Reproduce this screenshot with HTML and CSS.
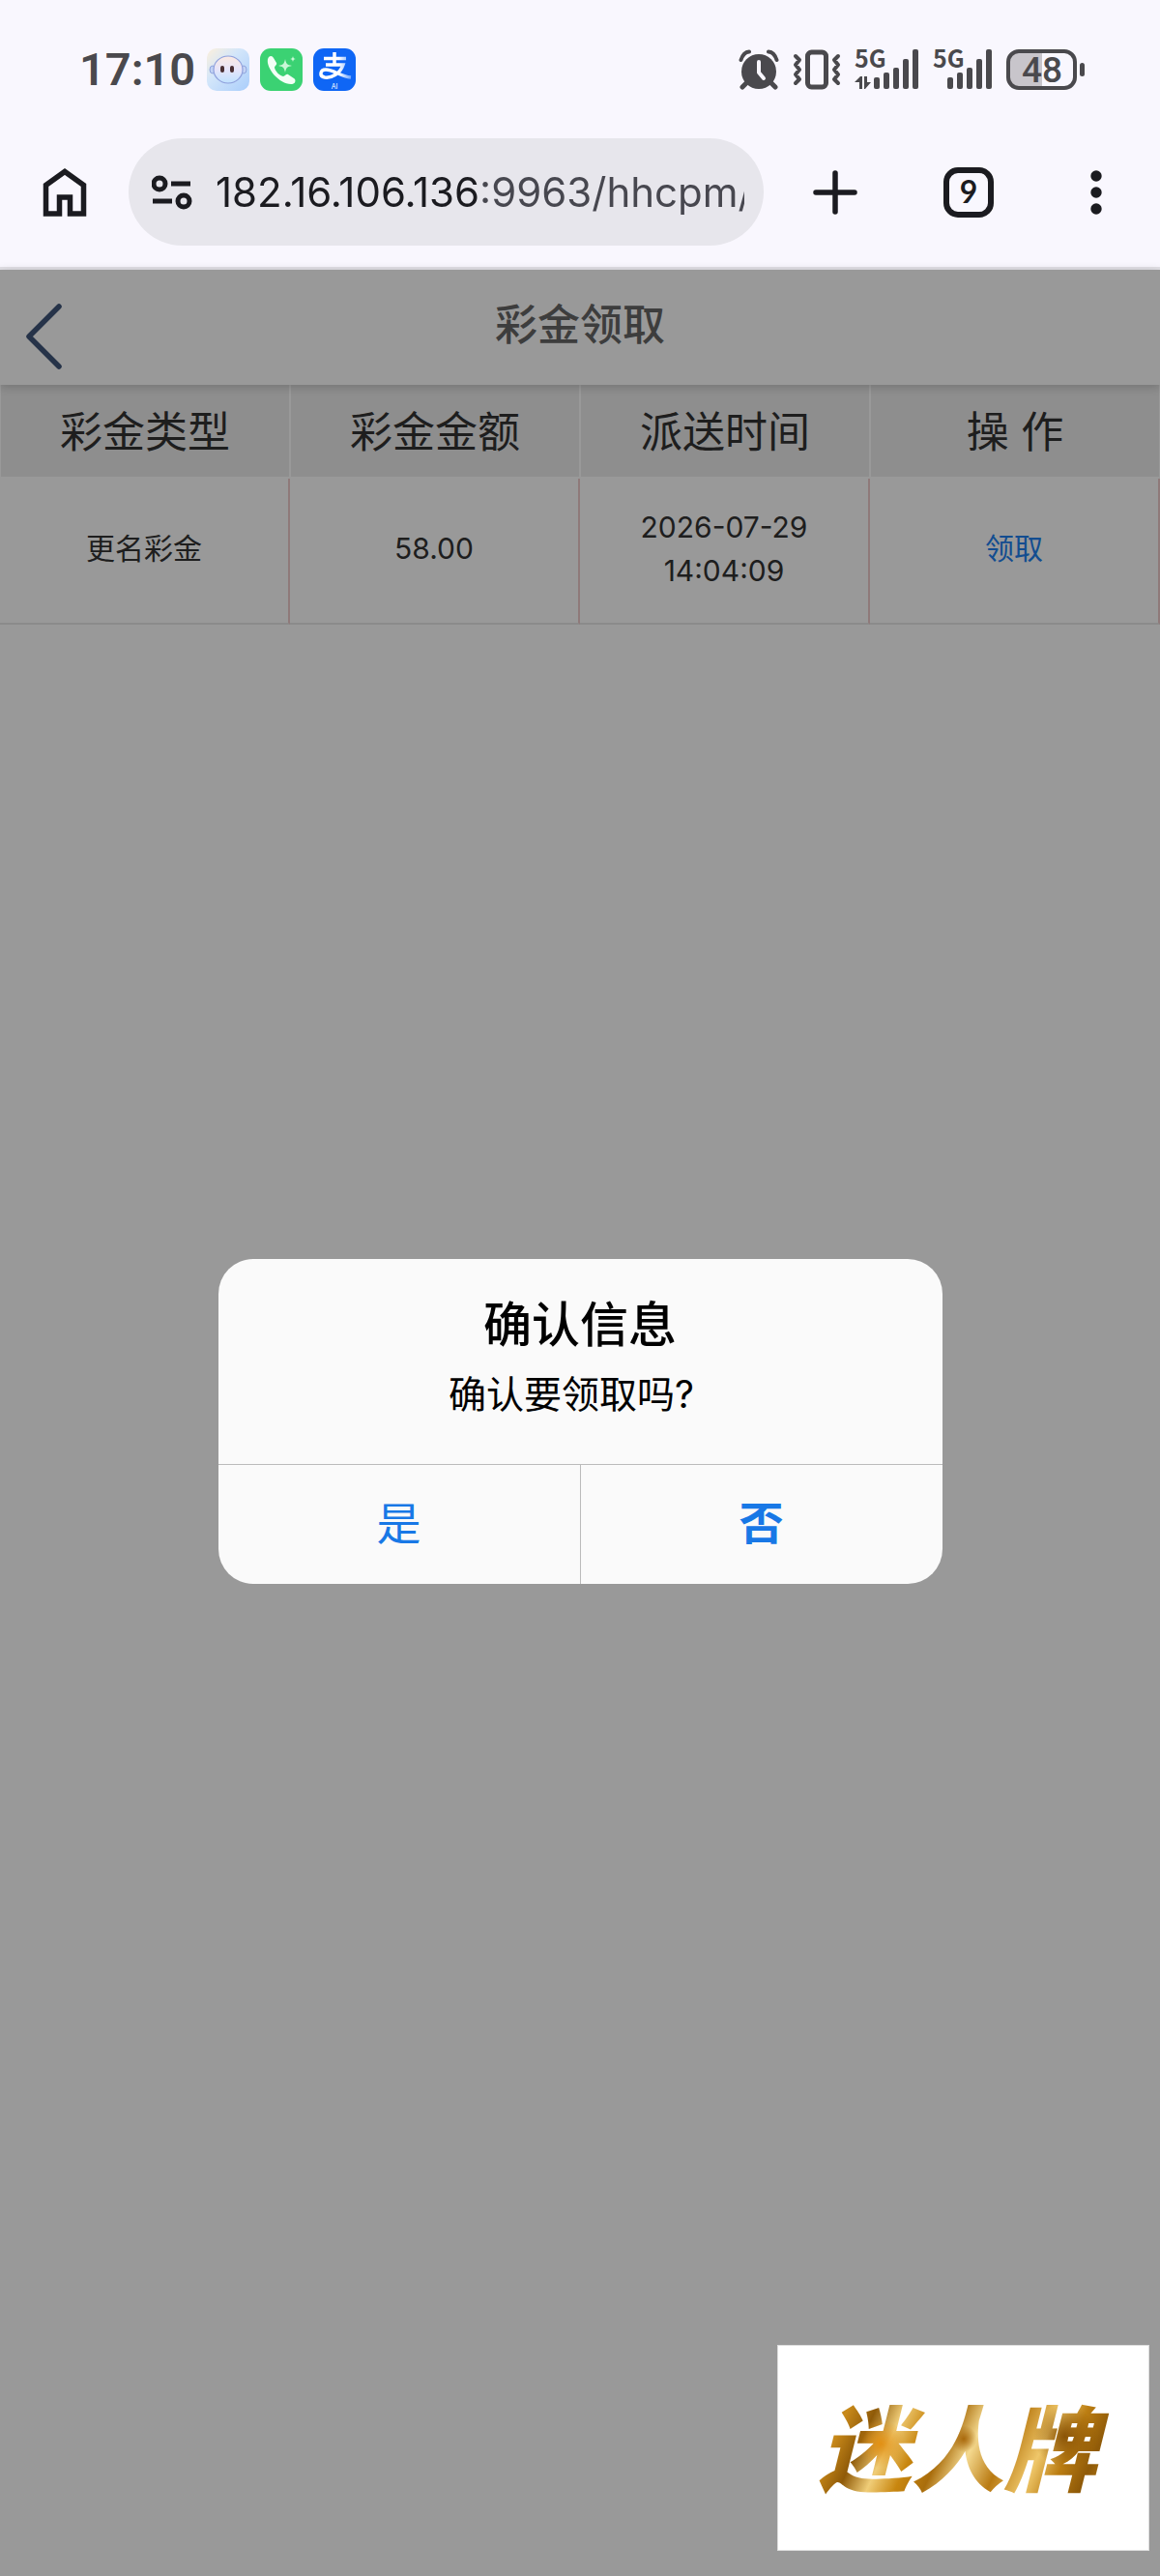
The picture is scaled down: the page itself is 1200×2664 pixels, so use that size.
FILE: index.html
```
<!DOCTYPE html>
<html lang="zh-CN">
<head>
    <meta charset="UTF-8">
    <meta name="viewport" content="width=device-width, initial-scale=1">
    <title>彩金领取</title>
    <link rel="stylesheet" href="styles.css">
</head>
<body>

    <div class="statusbar">
        <span class="clock">17:10</span>
        <div class="apps">
            <svg width="44" height="44" viewBox="0 0 44 44">
                <defs>
                    <linearGradient id="robotBg" x1="0" y1="0" x2="1" y2="1">
                        <stop offset="0" stop-color="#fdf0dc"/>
                        <stop offset=".4" stop-color="#d3e6fa"/>
                        <stop offset="1" stop-color="#a9cdfb"/>
                    </linearGradient>
                    <linearGradient id="robotFace" x1="0" y1="0" x2="0" y2="1">
                        <stop offset="0" stop-color="#fbeae2"/>
                        <stop offset=".5" stop-color="#e6e4fa"/>
                        <stop offset="1" stop-color="#bfe2ff"/>
                    </linearGradient>
                </defs>
                <rect width="44" height="44" rx="10" fill="url(#robotBg)"/>
                <ellipse cx="6" cy="22" rx="3" ry="4" fill="#c3d3f5" stroke="#8fa4dd"/>
                <ellipse cx="38" cy="22" rx="3" ry="4" fill="#c3d3f5" stroke="#8fa4dd"/>
                <ellipse cx="22" cy="22" rx="15" ry="14" fill="url(#robotFace)" stroke="#8fa0dc" stroke-width="1.2"/>
                <rect x="14" y="18" width="4" height="7" rx="2" fill="#4a2f33"/>
                <rect x="24" y="18" width="4" height="7" rx="2" fill="#4a2f33"/>
            </svg>
            <svg width="44" height="44" viewBox="0 0 44 44">
                <rect width="44" height="44" rx="11" fill="#3bd273"/>
                <path d="M9 9c2-2 4-1 5 1l3 5c1 2-2 3-2 5 1 4 5 8 9 9 2 0 3-3 5-2l6 4c3 2 1 6-2 6C21 38 6 21 8 11z" fill="#f3fff6"/>
                <path d="M26 11c1 5 2 6 7 7-5 1-6 2-7 7-1-5-2-6-7-7 5-1 6-2 7-7zM34 8c.4 2 1 2.600 3 3-2 .4-2.600 1-3 3-.4-2-1-2.600-3-3 2-.4 2.600-1 3-3z" fill="#c8f7d6"/>
            </svg>
            <svg width="44" height="44" viewBox="0 0 44 44">
                <defs>
                    <linearGradient id="tail" x1="0" y1="0" x2="1" y2="0">
                        <stop offset=".6" stop-color="#fff"/>
                        <stop offset="1" stop-color="#6ea6ff"/>
                    </linearGradient>
                </defs>
                <rect width="44" height="44" rx="11" fill="#0f66f5"/>
                <path d="M11 10.500h23M22 4v13M13 17h18C28 26 19 31 12 30c-6-1-5-8 1-8 8 0 15 7 26 8" fill="none" stroke="url(#tail)" stroke-width="3.500"/>
                <text x="22" y="42" class="ai">AI</text>
            </svg>
        </div>
        <div class="indicators">
            <svg width="42" height="42" viewBox="0 0 42 42">
                <circle cx="21" cy="23" r="18" fill="#4a494d"/>
                <path d="M2.500 11Q5 3 11 2.500M39.500 11Q37 3 31 2.500" fill="none" stroke="#4a494d" stroke-width="4" stroke-linecap="round"/>
                <path d="M8 35l-4 4M34 35l4 4" stroke="#4a494d" stroke-width="5" stroke-linecap="round"/>
                <path d="M21 13v11l5 6" fill="none" stroke="#f9f7fe" stroke-width="4" stroke-linecap="round" stroke-linejoin="round"/>
            </svg>
            <svg width="50" height="42" viewBox="0 0 50 42">
                <rect x="15.500" y="3" width="19" height="36" rx="4" fill="none" stroke="#4a494d" stroke-width="5"/>
                <path d="M3 7l4 4-4 5 4 5-4 5 4 5-4 4M47 7l-4 4 4 5-4 5 4 5-4 5 4 4" fill="none" stroke="#4a494d" stroke-width="4" stroke-linecap="round" stroke-linejoin="round"/>
            </svg>
            <svg width="67" height="62" viewBox="0 -10 67 62" fill="#4a494d">
                <text x="0" y="19" class="net">5G</text>
                <path d="M0 34l6-6h2v13H5v-7zM10 28h3v6h4l-6 7h-1z"/>
                <rect x="20" y="29" width="6" height="12" rx="2"/>
                <rect x="30" y="24" width="6" height="17" rx="2"/>
                <rect x="40" y="19" width="6" height="22" rx="2"/>
                <rect x="50" y="10" width="6" height="31" rx="2"/>
                <rect x="60" y="0" width="6" height="41" rx="2"/>
            </svg>
            <svg width="62" height="62" viewBox="0 -10 62 62" fill="#4a494d">
                <text x="0" y="19" class="net">5G</text>
                <rect x="15" y="29" width="6" height="12" rx="2"/>
                <rect x="25" y="24" width="6" height="17" rx="2"/>
                <rect x="35" y="19" width="6" height="22" rx="2"/>
                <rect x="45" y="10" width="6" height="31" rx="2"/>
                <rect x="55" y="0" width="6" height="41" rx="2"/>
            </svg>
            <svg width="82" height="42" viewBox="0 0 82 42">
                <path d="M13 3h24v36H13Q3 39 3 29V13Q3 3 13 3z" fill="#c8c5cb"/>
                <rect x="2" y="2" width="69" height="38" rx="11" fill="none" stroke="#4a494d" stroke-width="4"/>
                <rect x="76" y="14" width="5" height="14" rx="2.500" fill="#4a494d"/>
                <text x="37" y="34" class="level">48</text>
            </svg>
        </div>
    </div>

    <div class="toolbar">
        <button class="tool home" aria-label="主页">
            <svg width="46" height="52" viewBox="0 0 46 52">
                <path d="M3.500 48V18.500L23 4.500l19.500 14V48H28.500V31H17.500v17z" fill="none" stroke="#1b1b20" stroke-width="5.500"/>
            </svg>
        </button>
        <label class="address">
            <svg width="42" height="36" viewBox="0 0 42 36" fill="none" stroke="#1b1b20" stroke-width="5">
                <circle cx="8" cy="9" r="6"/>
                <circle cx="33" cy="27" r="6"/>
                <path d="M20 9h20M1 27h20"/>
            </svg>
            <input class="url" type="text" aria-label="网址" value="182.16.106.136:9963/hhcpm/">
        </label>
        <button class="tool add" aria-label="新标签页">
            <svg width="46" height="46" viewBox="0 0 46 46">
                <path d="M23 3v40M3 23h40" stroke="#1b1b20" stroke-width="5.500" stroke-linecap="round"/>
            </svg>
        </button>
        <button class="tool tabs"><span class="tab-count">9</span></button>
        <button class="tool menu" aria-label="菜单">
            <svg width="12" height="46" viewBox="0 0 12 46" fill="#1b1b20">
                <circle cx="6" cy="6" r="5.700"/>
                <circle cx="6" cy="23" r="5.700"/>
                <circle cx="6" cy="40" r="5.700"/>
            </svg>
        </button>
    </div>

    <main class="page">
        <header class="navbar">
            <a class="back" href="#" aria-label="返回">
                <svg width="40" height="70" viewBox="0 0 40 70">
                    <path d="M37 4L6 35l31 31" fill="none" stroke="#40557a" stroke-width="5.500" stroke-linecap="round" stroke-linejoin="round"/>
                </svg>
            </a>
            <h1>彩金领取</h1>
        </header>

        <table class="bonus">
            <thead>
                <tr><th>彩金类型</th><th>彩金金额</th><th>派送时间</th><th>操 作</th></tr>
            </thead>
            <tbody>
                <tr>
                    <td>更名彩金</td>
                    <td>58.00</td>
                    <td>2026-07-29<br>14:04:09</td>
                    <td><a href="#">领取</a></td>
                </tr>
            </tbody>
        </table>

        <div class="overlay">
            <div class="modal" role="dialog" aria-labelledby="modalTitle">
                <div class="modal-inner">
                    <h2 id="modalTitle">确认信息</h2>
                    <p>确认要领取吗?</p>
                </div>
                <div class="modal-buttons">
                    <button>是</button>
                    <button class="strong">否</button>
                </div>
            </div>
        </div>

        <div class="brand"><span>迷人牌</span></div>
    </main>

</body>
</html>
```
FILE: styles.css
```
* {
    margin: 0;
    padding: 0;
    box-sizing: border-box;
}
body {
    display: flex;
    flex-direction: column;
    min-height: 100vh;
    background: #f9f7fe;
    font-family: Inter, "Noto Sans CJK SC", sans-serif;
}
button {
    background: none;
    border: none;
    font-family: inherit;
    cursor: pointer;
}
a {
    color: #2080f0;
    text-decoration: none;
}
svg {
    display: block;
    flex: none;
}

/* system status bar */
.statusbar {
    display: flex;
    align-items: center;
    height: 143px;
    padding: 0 77px 0 82px;
}
.clock {
    width: 132px;
    font-family: Roboto, sans-serif;
    font-size: 47px;
    font-weight: 600;
    color: #4a494d;
}
.apps {
    display: flex;
    gap: 11px;
}
.indicators {
    display: flex;
    align-items: center;
    gap: 14px;
    margin-left: auto;
}
.ai {
    font-size: 7px;
    fill: #fff;
    text-anchor: middle;
}
.net {
    font-family: "Noto Sans CJK SC", sans-serif;
    font-size: 25px;
    font-weight: 700;
}
.level {
    font-family: Roboto, sans-serif;
    font-size: 37px;
    font-weight: 500;
    fill: #4a494d;
    text-anchor: middle;
}

/* browser toolbar */
.toolbar {
    display: flex;
    align-items: center;
    padding-bottom: 22px;
    border-bottom: 3px solid #e2e0e6;
}
.tool {
    display: flex;
    align-items: center;
    justify-content: center;
    height: 111px;
}
.home,
.menu {
    width: 133px;
}
.add {
    width: 147px;
}
.tabs {
    width: 130px;
}
.address {
    display: flex;
    flex: 1;
    align-items: center;
    gap: 24px;
    min-width: 0;
    height: 111px;
    padding: 0 20px 0 24px;
    border-radius: 56px;
    background: #e7e6ec;
}
.url {
    flex: 1;
    min-width: 0;
    height: 64px;
    border: none;
    outline: none;
    font-family: Inter, sans-serif;
    font-size: 42px;
    color: transparent;
    background: linear-gradient(90deg, #1b1b20 273px, #47474f 273px);
    -webkit-background-clip: text;
    background-clip: text;
}
.tab-count {
    width: 52px;
    height: 52px;
    border: 6px solid #1b1b20;
    border-radius: 15px;
    color: #1b1b20;
    font-family: Lato, sans-serif;
    font-size: 32px;
    font-weight: 700;
    line-height: 38px;
}

/* page */
.page {
    position: relative;
    flex: 1;
    background: #fff;
}
.navbar {
    position: relative;
    height: 119px;
    background: #fff;
    box-shadow: 0 2px 10px rgba(0, 0, 0, 0.2);
}
.navbar h1 {
    font-size: 44px;
    font-weight: 500;
    line-height: 114px;
    text-align: center;
    color: #666;
}
.back {
    position: absolute;
    left: 24px;
    top: 34px;
}
.bonus {
    width: 100%;
    table-layout: fixed;
    border-spacing: 0;
    text-align: center;
    color: #333;
}
.bonus th {
    height: 97px;
    padding-bottom: 4px;
    border: solid #fff;
    border-width: 0 1px 2px 1px;
    background: #ededed;
    font-size: 44px;
    font-weight: 400;
}
.bonus td {
    height: 151px;
    padding-bottom: 4px;
    border-right: 2px solid #efcccc;
    border-bottom: 2px solid #e8e8e8;
    font-size: 30px;
    line-height: 45px;
}

/* confirm dialog */
.overlay {
    position: absolute;
    inset: 0;
    display: flex;
    align-items: center;
    justify-content: center;
    padding-bottom: 3px;
    background: rgba(0, 0, 0, 0.4);
}
.modal {
    width: 749px;
    max-width: 90%;
    overflow: hidden;
    border-radius: 36px;
    background: #fafafa;
    text-align: center;
}
.modal-inner {
    padding: 36px 40px;
    border-bottom: 1px solid #bbb;
}
.modal h2 {
    font-size: 50px;
    font-weight: 500;
    line-height: 64px;
}
.modal p {
    padding: 8px 18px 4px 0;
    font-size: 39px;
    line-height: 64px;
}
.modal-buttons {
    display: flex;
    height: 123px;
}
.modal-buttons button {
    flex: 1;
    padding-bottom: 10px;
    color: #1878e6;
    font-size: 46px;
}
.modal-buttons button + button {
    border-left: 1px solid #bbb;
}
.modal-buttons .strong {
    font-weight: 700;
}

/* brand card */
.brand {
    position: absolute;
    right: 11px;
    bottom: 26px;
    display: flex;
    align-items: center;
    justify-content: center;
    width: 385px;
    height: 213px;
    border: 1px solid #ddd;
    background: #fff;
}
.brand span {
    padding: 4px 16px 0 4px;
    font-size: 96px;
    font-weight: 900;
    font-style: italic;
    line-height: 120px;
    color: transparent;
    background:
        radial-gradient(circle at 22% 46%, #e29013 0, transparent 10%),
        radial-gradient(circle at 84% 40%, #8a5407 0, transparent 12%),
        radial-gradient(circle at 50% 42%, #a9690c 0, transparent 8%),
        linear-gradient(115deg, #9a6409, #c98a1a 12%, #8f5a08 20%, #f0cd78 28%, #c8860f 36%, #a96d0c 44%, #f5da90 52%, #b97a12 62%, #efc76a 72%, #bb7d12 80%, #8f5a08 88%, #c98f22);
    -webkit-background-clip: text;
    background-clip: text;
}
```
